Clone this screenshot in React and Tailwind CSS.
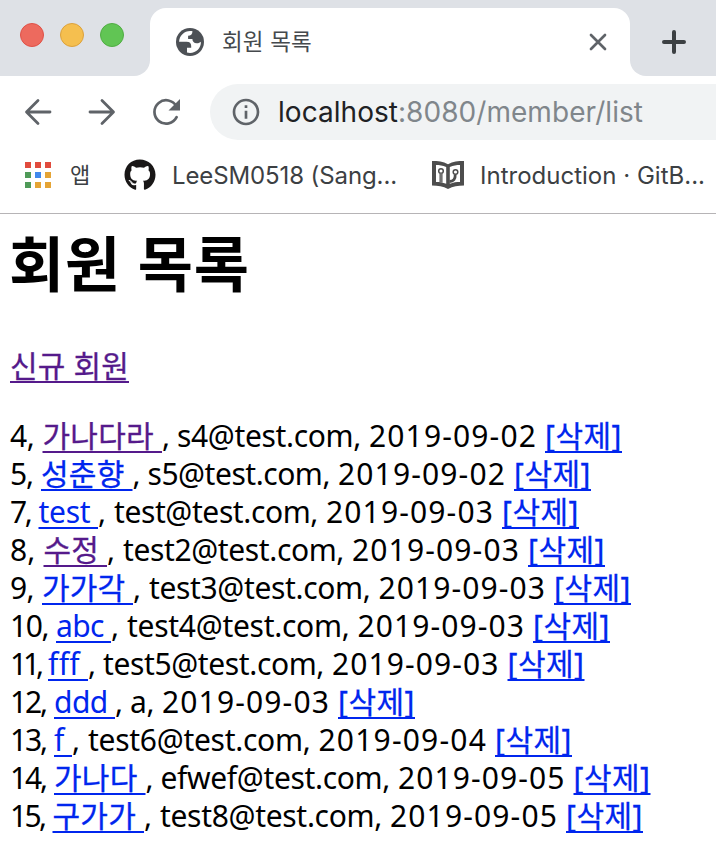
import { useLayoutEffect, useRef } from "react";
import { FaGithub } from "react-icons/fa";
import { MdInfoOutline } from "react-icons/md";

// Spreads a run of text over a given width through letter spacing.
function Fit({ w, className = "", children }) {
  const ref = useRef(null);
  useLayoutEffect(() => {
    const el = ref.current;
    const apply = () => {
      el.style.letterSpacing = "0px";
      el.style.width = "auto";
      const natural = el.getBoundingClientRect().width;
      el.style.letterSpacing = `${(w - natural) / el.textContent.length}px`;
      el.style.width = `${w}px`;
    };
    apply();
    document.fonts?.ready.then(apply);
  }, [w]);
  return (
    <span ref={ref} className={`inline-block shrink-0 whitespace-pre ${className}`}>
      {children}
    </span>
  );
}

const LINK = "underline decoration-2 underline-offset-[4px] [text-decoration-skip-ink:none]";
const HANGUL = "[-webkit-text-stroke:0.3px_currentColor]";

// x: link start, link end, email start, date start, delete start
const MEMBERS = [
  { id: 4, name: "가나다라", email: "s4@test.com", date: "2019-09-02", visited: true, x: [42.5, 162, 177, 369, 545] },
  { id: 5, name: "성춘향", email: "s5@test.com", date: "2019-09-02", x: [41, 132.5, 147.5, 338, 514] },
  { id: 7, name: "test", latin: true, email: "test@test.com", date: "2019-09-03", x: [38.5, 98, 114, 326, 502] },
  { id: 8, name: "수정", email: "test2@test.com", date: "2019-09-03", visited: true, x: [43.5, 107, 123, 352, 528] },
  { id: 9, name: "가가각", email: "test3@test.com", date: "2019-09-03", x: [42, 133, 149, 378.5, 554] },
  { id: 10, name: "abc", latin: true, email: "test4@test.com", date: "2019-09-03", x: [56, 111, 127, 357.5, 533] },
  { id: 11, name: "fff", latin: true, email: "test5@test.com", date: "2019-09-03", x: [48, 88, 103, 332, 507.5] },
  { id: 12, name: "ddd", latin: true, email: "a", date: "2019-09-03", x: [54, 115, 130, 162, 338] },
  { id: 13, name: "f", latin: true, email: "test6@test.com", date: "2019-09-04", x: [54, 72, 88, 318.5, 495] },
  { id: 14, name: "가나다", email: "efwef@test.com", date: "2019-09-05", x: [54, 145.5, 160.5, 398, 573.5] },
  { id: 15, name: "구가가", email: "test8@test.com", date: "2019-09-05", x: [52.5, 144, 160, 390, 566] },
];

function Member({ m }) {
  const [a, b, c, d, e] = m.x;
  return (
    <li className="flex h-[38px] items-center">
      <Fit w={a - 18}>{`${m.id},`}</Fit>
      <span className="w-2 shrink-0 overflow-hidden whitespace-pre"> </span>
      <Fit w={b - a} className={`${LINK} ${m.latin ? "" : HANGUL} ${m.visited ? "text-[#551a8b]" : "text-[#0026ee]"}`}>
        {`${m.name} `}
      </Fit>
      <Fit w={c - b}>{", "}</Fit>
      <Fit w={d - c - 8}>{`${m.email},`}</Fit>
      <span className="w-2 shrink-0 overflow-hidden whitespace-pre"> </span>
      <Fit w={e - d - 8}>{m.date}</Fit>
      <span className="w-2 shrink-0 overflow-hidden whitespace-pre"> </span>
      <Fit w={77} className={`${LINK} ${HANGUL} text-[#0026ee]`}>[삭제]</Fit>
    </li>
  );
}

function Globe() {
  return (
    <svg viewBox="0 0 28 28" className="size-7 shrink-0" fill="none">
      <circle cx="14" cy="14" r="14" fill="#4d5156" />
      <path fill="#fff" d="M16.500 3.200C9.500 1.800 3.300 7 3.100 13.800H10.500c3.200 0 4.700 1.500 4.700 4.200v1.800h-4.200v4.800C18.500 26.500 25.300 21 24.900 13.800c-.9.900-2.200 1.500-4.200 1.500-2.700 0-4.300-1.600-4.300-4.200h-4.300V7.800c2.600 0 4.300-1.500 4.400-4.600z" />
    </svg>
  );
}

function Book() {
  return (
    <svg viewBox="0 0 32 28" className="h-7 w-8 shrink-0" fill="none">
      <path fill="#4d4d4d" fillRule="evenodd" d="M0 0c6 0 11 .5 16 3.300C21 .5 26 0 32 0v24.500c-6 0-11 .7-16 3.500-5-2.800-10-3.500-16-3.500zM4 4v17c3.500 0 6.500.4 10.200 1.700V6C10.500 4.600 7.500 4 4 4zm24 0c-3.500 0-6.500.6-10.200 2v16.700C21.500 21.400 24.500 21 28 21z" />
      <circle cx="9" cy="10" r="2.300" stroke="#4d4d4d" strokeWidth="1.500" />
      <path d="M9 12.300V21.500" stroke="#4d4d4d" strokeWidth="3" />
      <path d="M9 12.300V21.500" stroke="#aaa" strokeWidth="0.800" />
      <circle cx="23.500" cy="11" r="2.300" stroke="#4d4d4d" strokeWidth="1.500" />
      <path d="M17.500 20.500c4 0 6-2.500 5.700-7" stroke="#4d4d4d" strokeWidth="2.800" />
    </svg>
  );
}

const APP_DOTS = ["bg-[#e14b3d]", "bg-[#e14b3d]", "bg-[#e14b3d]", "bg-[#4f9a58]", "bg-[#4189ed]", "bg-[#e5a435]", "bg-[#4f9a58]", "bg-[#e5a435]", "bg-[#e5a435]"];

export default function App() {
  return (
    <div className="h-[864px] w-[716px] overflow-hidden bg-white font-['Noto_Sans','Noto_Sans_CJK_KR',sans-serif] text-black">
      <header className="font-[Inter,'Noto_Sans_CJK_KR',sans-serif]">
        <div className="flex h-[76px]">
          <div className="flex w-[150px] gap-4 rounded-br-2xl bg-[#dee1e6] pt-[23px] pl-5">
            <i className="size-6 rounded-full border border-[#df5147] bg-[#ed6a5e]" />
            <i className="size-6 rounded-full border border-[#dca13c] bg-[#f5bf4f]" />
            <i className="size-6 rounded-full border border-[#50ad43] bg-[#61c554]" />
          </div>
          <div className="w-[480px] bg-[#dee1e6] pt-2">
            <div className="flex h-[68px] items-center rounded-t-2xl bg-white pr-[23px] pl-[26px]">
              <Globe />
              <span className="ml-[18px] flex-1 text-[22.5px] leading-8 text-[#45494d]"><Fit w={90}>회원 목록</Fit></span>
              <svg viewBox="0 0 18 18" className="size-[18px]" stroke="#5f6368" strokeWidth="2.700" strokeLinecap="round"><path d="M2 2l14 14M16 2L2 16" /></svg>
            </div>
          </div>
          <div className="flex flex-1 items-center rounded-bl-2xl bg-[#dee1e6] pt-2 pl-8">
            <svg viewBox="0 0 24 24" className="size-6" stroke="#3c4043" strokeWidth="4" strokeLinecap="round"><path d="M12 2v20M2 12h20" /></svg>
          </div>
        </div>
        <div className="flex h-[72px] items-center">
          <div className="flex w-[210px] items-center pl-6">
            <svg viewBox="0 0 28 28" className="size-7" fill="none" stroke="#5f6368" strokeWidth="2.800" strokeLinecap="round" strokeLinejoin="round"><path d="M26 14H3M14 2.500L2.500 14 14 25.500" /></svg>
            <svg viewBox="0 0 28 28" className="ml-9 size-7" fill="none" stroke="#5f6368" strokeWidth="2.800" strokeLinecap="round" strokeLinejoin="round"><path d="M2 14h23M14 2.500L25.500 14 14 25.500" /></svg>
            <svg viewBox="0 0 28 28" className="ml-9 size-7" fill="none">
              <path d="M24.500 8.500A11.700 11.700 0 1 0 24.600 19.200" stroke="#5f6368" strokeWidth="2.700" strokeLinecap="round" />
              <path d="M28 1v11.500H16.500z" fill="#5f6368" />
            </svg>
          </div>
          <div className="flex h-14 flex-1 items-center rounded-l-full bg-[#f1f3f4] pl-5">
            <MdInfoOutline className="size-8 text-[#5f6368]" />
            <span className="ml-4 text-[28px] text-[#202124]"><Fit w={120}>localhost</Fit></span>
            <span className="text-[28px] text-[#80868b]"><Fit w={245}>:8080/member/list</Fit></span>
          </div>
        </div>
        <div className="flex h-[66px] items-center border-b border-[#b6b4b6] pb-[11px] pl-[25px] text-2xl text-[#3c4043]">
          <div className="grid grid-cols-3 gap-1">
            {APP_DOTS.map((c, i) => <i key={i} className={`size-1.5 ${c}`} />)}
          </div>
          <span className="ml-[19px] pt-0.5 text-[22px]"><Fit w={20}>앱</Fit></span>
          <FaGithub className="ml-[34px] size-8 text-[#191717]" />
          <span className="ml-4 pt-0.5"><Fit w={225}>LeeSM0518 (Sang...</Fit></span>
          <span className="ml-[35px] flex"><Book /></span>
          <span className="ml-4 pt-0.5"><Fit w={225}>Introduction · GitB...</Fit></span>
        </div>
      </header>
      <main className="pl-[9px]">
        <h1 className="pt-[5px] text-[60px] leading-[90px] font-bold"><Fit w={241}>회원 목록</Fit></h1>
        <p className="mt-[37px] ml-px flex h-10 items-center text-[30px] leading-[38px] text-[#551a8b]">
          <Fit w={119} className={`${LINK} ${HANGUL}`}>신규 회원</Fit>
        </p>
        <ul className="mt-[31px] ml-px text-[30px] leading-[38px]">
          {MEMBERS.map((m) => <Member key={m.id} m={m} />)}
        </ul>
      </main>
    </div>
  );
}
